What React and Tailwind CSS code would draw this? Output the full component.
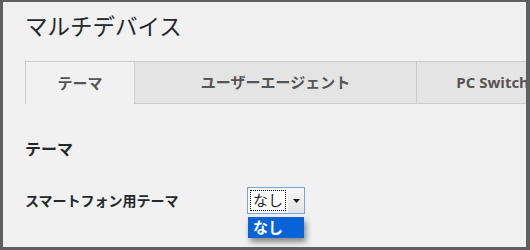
import React from "react";

const font = { fontFamily: '"Open Sans", "Noto Sans CJK JP", sans-serif' };

export default function App() {
  return (
    <div
      className="relative h-[250px] w-[530px] overflow-hidden border-b-[3px] border-l-[3px] border-r-4 border-t-2 border-[#5f5f5f] bg-[#f1f1f1] text-[#23282d]"
      style={font}
    >
      <div className="pl-[22px] pt-[9px]">
        <h1 className="text-[22.5px] leading-[32px] font-normal">マルチデバイス</h1>

        {/* tabs */}
        <div className="mt-[18px] flex h-[43px] w-[600px] border-b border-[#cccccc]">
          <div className="-mb-px flex w-[110px] items-center justify-center border border-b-0 border-[#cccccc] bg-[#f1f1f1] text-[15px] font-bold text-[#555]">
            テーマ
          </div>
          <div className="flex w-[282px] items-center justify-center border-t border-r border-[#cccccc] bg-[#e4e4e4] text-[15px] font-bold text-[#555]">
            ユーザーエージェント
          </div>
          <div className="flex w-[168px] items-center justify-center border-t border-r border-[#cccccc] bg-[#e4e4e4] text-[15px] font-bold text-[#555]">
            PC Switcher
          </div>
        </div>

        <h2 className="mt-[33px] text-[16px] leading-[24px] font-bold text-[#23282d]">テーマ</h2>

        <div className="mt-[26px] flex items-start">
          <div className="w-[222px] pt-[4px] text-[14px] leading-[20px] font-bold">スマートフォン用テーマ</div>
          <div className="relative">
            <div className="flex h-[27px] w-[58px] border border-[#7da2d6] bg-white">
              <div className="m-[2px] flex flex-1 items-center justify-center border border-dotted border-black text-[15px] leading-none text-[#222]">
                なし
              </div>
              <div className="flex w-[16px] items-center justify-center bg-gradient-to-b from-[#f8f8f8] to-[#e2e2e2]">
                <svg width="7" height="4" viewBox="0 0 7 4">
                  <path d="M0 0h7L3.5 4z" fill="#111" />
                </svg>
              </div>
            </div>
            <div className="absolute left-[1px] top-[30px] flex h-[21px] w-[56px] items-center bg-[#0864d6] pl-[5px] text-[15px] leading-none font-bold text-white shadow-[2px_4px_6px_rgba(0,0,0,0.45)]">
              なし
            </div>
          </div>
        </div>
      </div>
    </div>
  );
}
